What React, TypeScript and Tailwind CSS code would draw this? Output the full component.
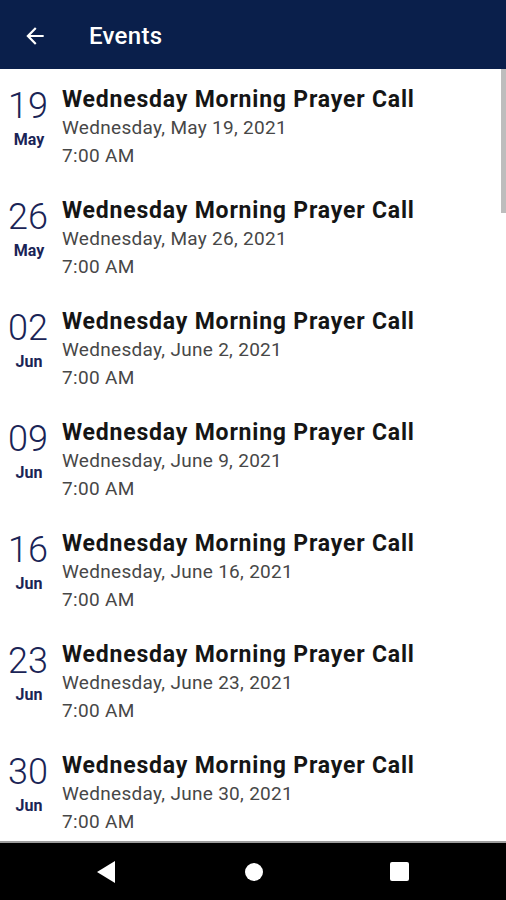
import React from "react";

const events = [
  { day: "19", mon: "May", date: "Wednesday, May 19, 2021" },
  { day: "26", mon: "May", date: "Wednesday, May 26, 2021" },
  { day: "02", mon: "Jun", date: "Wednesday, June 2, 2021" },
  { day: "09", mon: "Jun", date: "Wednesday, June 9, 2021" },
  { day: "16", mon: "Jun", date: "Wednesday, June 16, 2021" },
  { day: "23", mon: "Jun", date: "Wednesday, June 23, 2021" },
  { day: "30", mon: "Jun", date: "Wednesday, June 30, 2021" },
];

export default function App() {
  return (
    <div
      className="w-[506px] h-[900px] flex flex-col overflow-hidden bg-white"
      style={{ fontFamily: "Roboto, 'Noto Sans', sans-serif" }}
    >
      <header className="h-[69px] shrink-0 bg-[#0a1f4b] flex items-center pt-[3px]">
        <div className="w-[89px] pl-[22px] flex items-center">
          <svg width="26" height="26" viewBox="0 0 24 24" fill="#ffffff">
            <path d="M20 11H7.83l5.59-5.59L12 4l-8 8 8 8 1.41-1.41L7.83 13H20v-2z" />
          </svg>
        </div>
        <div className="text-white text-[24px] font-medium leading-none tracking-[0.3px]">Events</div>
      </header>
      <main className="flex-1 relative overflow-hidden">
        <div className="absolute right-0 top-0 w-[5px] h-[144px] bg-[#bdbdbd]" />
        {events.map((e, i) => (
          <div key={i} className="h-[111px] flex">
            <div className="w-[56px] shrink-0 flex flex-col items-center pt-[19px]">
              <div className="text-[36px] leading-[36px] font-light text-[#1a2456]">{e.day}</div>
              <div className="mt-[6px] ml-[2px] text-[16px] leading-[20px] font-bold text-[#1a2456]">{e.mon}</div>
            </div>
            <div className="pl-[6px] pt-[17px] flex flex-col">
              <div className="text-[23px] leading-[28px] font-bold text-[#151515] tracking-[0.8px]">Wednesday Morning Prayer Call</div>
              <div className="text-[19px] leading-[28px] text-[#474747] tracking-[0.3px]">{e.date}</div>
              <div className="mt-[1px] text-[19px] leading-[26px] text-[#474747] tracking-[0.35px]">7:00 AM</div>
            </div>
          </div>
        ))}
      </main>
      <div className="h-[2px] shrink-0 bg-[#9e9e9e]" />
      <nav className="h-[57px] shrink-0 bg-black flex items-center">
        <div className="w-[212px] flex justify-center">
          <svg width="20" height="24" viewBox="0 0 20 24">
            <path d="M19 1 L19 23 L1 12 Z" fill="#ffffff" />
          </svg>
        </div>
        <div className="w-[84px] flex justify-center">
          <div className="w-[18px] h-[18px] rounded-full bg-white" />
        </div>
        <div className="flex-1 flex justify-center pr-[4px]">
          <div className="w-[19px] h-[19px] rounded-[2px] bg-white" />
        </div>
      </nav>
    </div>
  );
}
